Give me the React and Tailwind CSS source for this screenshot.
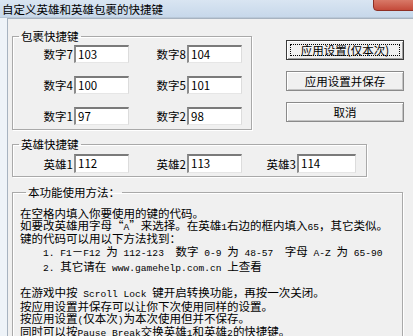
import React from 'react';

function TextBox({ value, w = 'w-[55px]', h = 'h-[18px]' }) {
  return (
    <div
      className={`${w} ${h} shrink-0 bg-white border-t-2 border-l-2 border-t-[#7a7a7a] border-l-[#8c8c8c] border-b border-r border-b-[#e6e6e6] border-r-[#dcdcdc] pl-[2px] text-[11.5px] leading-[14px] text-black`}
    >
      {value}
    </div>
  );
}

function Label({ children, w }) {
  return <div className={`${w} shrink-0 text-right pr-[1px] text-[11.5px] leading-[14px]`}>{children}</div>;
}

function Button({ children, focused }) {
  if (focused) {
    return (
      <div className="relative h-[20px] w-[118px] flex items-center justify-center bg-[#f0f0f0] border border-[#3a3a3a] shadow-[inset_1px_1px_0_#fff,inset_-1px_-1px_0_#a0a0a0] text-[11.5px] leading-[14px]">
        <span className="absolute inset-[3px] border border-dotted border-black" />
        {children}
      </div>
    );
  }
  return (
    <div className="h-[20px] w-[118px] flex items-center justify-center bg-[#f0f0f0] border border-[#8a8a8a] shadow-[inset_1px_1px_0_#fff,inset_-1px_-1px_0_#c4c4c4] text-[11.5px] leading-[14px]">
      {children}
    </div>
  );
}

// half-width ascii, like the bitmap font of the original dialog
function M({ children }) {
  return <span className="font-['Liberation_Mono',monospace] text-[9.6px]">{children}</span>;
}

const groupBox =
  'border border-[#a9a9a9] shadow-[inset_1px_1px_0_#fff,1px_1px_0_#fff]';

export default function App() {
  return (
    <div className="w-[413px] h-[336px] overflow-hidden bg-[#e6edf5] text-black font-['Noto_Sans_CJK_SC','Liberation_Sans',sans-serif] flex flex-col">
      {/* title bar */}
      <div className="relative h-[18px] shrink-0 bg-gradient-to-b from-[#d9e5f2] to-[#c7d8ea] border-b border-[#b9c8d8] flex items-center pl-[2px]">
        <span className="text-[11.5px] leading-[14px]">自定义英雄和英雄包裹的快捷键</span>
        <div className="absolute right-[-4px] top-[-10px] w-[44px] h-[21px] rounded-b-[4px] bg-gradient-to-b from-[#e8a090] to-[#c44a3a] border border-[#8e2f24] flex items-end justify-center pb-[9px]">
          <span className="text-white text-[11px] leading-[10px] font-bold font-['Liberation_Sans',sans-serif]">x</span>
        </div>
      </div>

      <div className="flex flex-1 min-h-0">
        <div className="w-[7px] shrink-0 bg-[#eef3f8]" />
        <div className="flex-1 bg-[#f0f0f0] border-l border-t border-[#a7b3c0] pt-[10px] pl-[4px]">
          {/* top row */}
          <div className="flex">
            <fieldset className={`${groupBox} w-[240px] pb-[4px]`}>
              <legend className="ml-[6px] px-[2px] text-[11.5px] leading-[14px]">包裹快捷键</legend>
              <div className="flex flex-col gap-[13px] mt-[2px]">
                {[
                  ['数字7', '103', '数字8', '104'],
                  ['数字4', '100', '数字5', '101'],
                  ['数字1', '97', '数字2', '98'],
                ].map((r) => (
                  <div key={r[0]} className="flex items-center">
                    <Label w="w-[61px]">{r[0]}</Label>
                    <TextBox value={r[1]} />
                    <Label w="w-[58px]">{r[2]}</Label>
                    <TextBox value={r[3]} />
                  </div>
                ))}
              </div>
            </fieldset>
            <div className="ml-[34px] mt-[11px] flex flex-col gap-[11px]">
              <Button focused>应用设置(仅本次)</Button>
              <Button>应用设置并保存</Button>
              <Button>取消</Button>
            </div>
          </div>

          {/* heroes */}
          <fieldset className={`${groupBox} w-[355px] mt-[7px] pb-[3px]`}>
            <legend className="ml-[6px] px-[2px] text-[11.5px] leading-[14px]">英雄快捷键</legend>
            <div className="flex items-center mt-[3px]">
              <Label w="w-[61px]">英雄1</Label>
              <TextBox value="112" h="h-[19px]" />
              <Label w="w-[58px]">英雄2</Label>
              <TextBox value="113" h="h-[19px]" />
              <Label w="w-[55px]">英雄3</Label>
              <TextBox value="114" w="w-[59px]" h="h-[19px]" />
            </div>
          </fieldset>

          {/* help */}
          <fieldset className={`${groupBox} w-[391px] h-[200px] mt-[8px] pl-[7px] pt-[9px]`}>
            <legend className="ml-[6px] px-[2px] text-[11.5px] leading-[14px]">本功能使用方法：</legend>
            <div className="text-[11.5px] whitespace-pre">
              <div className="leading-[11.5px]">在空格内填入你要使用的键的代码。</div>
              <div className="leading-[11.5px]">
                如要改英雄用字母“<M>A</M>”来选择。在英雄<M>1</M>右边的框内填入<M>65</M>，其它类似。
              </div>
              <div className="leading-[11.5px]">键的代码可以用以下方法找到：</div>
              <div className="leading-[13px] pl-[23px]">
                <M>1. F1</M>－<M>F12 </M>为<M> 112-123  </M>数字<M> 0-9 </M>为<M> 48-57  </M>字母<M> A-Z </M>为<M> 65-90</M>
              </div>
              <div className="leading-[13px] pl-[23px]">
                <M>2. </M>其它请在<M> www.gamehelp.com.cn </M>上查看
              </div>
              <div className="h-[12.5px]" />
              <div className="leading-[11.75px]">
                在游戏中按<M> Scroll Lock </M>键开启转换功能，再按一次关闭。
              </div>
              <div className="leading-[11.75px]">按应用设置并保存可以让你下次使用同样的设置。</div>
              <div className="leading-[11.75px]">
                按应用设置<M>(</M>仅本次<M>)</M>为本次使用但并不保存。
              </div>
              <div className="leading-[11.75px]">
                同时可以按<M>Pause Break</M>交换英雄<M>1</M>和英雄<M>2</M>的快捷键。
              </div>
              <div className="leading-[11.75px] pl-[46px]">
                按<M>Page Up    </M>交换英雄<M>2</M>和英雄<M>3</M>的快捷键。
              </div>
            </div>
          </fieldset>
        </div>
      </div>
    </div>
  );
}
